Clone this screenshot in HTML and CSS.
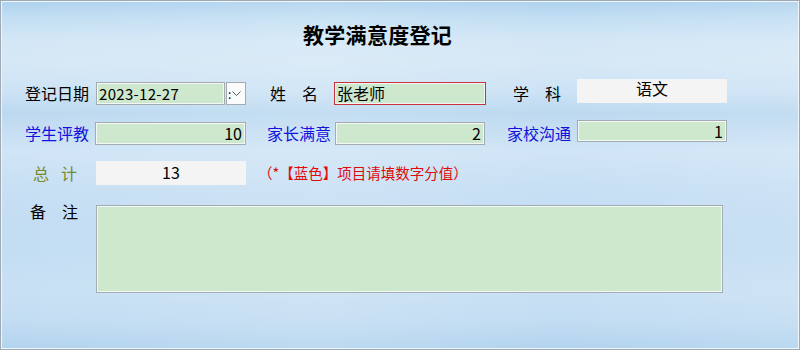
FILE: index.html
```html
<!DOCTYPE html>
<html lang="zh-CN">
<head>
<meta charset="utf-8">
<title>教学满意度登记</title>
<link rel="stylesheet" href="styles.css">
</head>
<body>
<div class="window">
  <h1 class="title">教学满意度登记</h1>
  <div class="form">
    <span class="lbl r1">登记日期</span>
    <div class="date-wrap r1">
      <span class="field green date-input">2023-12-27</span>
      <span class="drop"><span class="focus">:</span><svg width="9" height="6" viewBox="0 0 9 6"><path d="M0.5 0.5 L4.5 4.5 L8.5 0.5" fill="none" stroke="#555" stroke-width="1"/></svg></span>
    </div>
    <span class="lbl r1 spaced name-lbl">姓名</span>
    <span class="field green r1 name-input">张老师</span>
    <span class="lbl r1 spaced subj-lbl">学科</span>
    <span class="field gray subj-input">语文</span>

    <span class="lbl blue r2">学生评教</span>
    <span class="field green num r2 f-a">10</span>
    <span class="lbl blue r2 pad21">家长满意</span>
    <span class="field green num r2 f-b">2</span>
    <span class="lbl blue r2 pad21">家校沟通</span>
    <span class="field green num f-c">1</span>

    <span class="lbl olive r3 total-lbl">总计</span>
    <span class="field gray r3 total-input">13</span>
    <span class="hint r3">（*【蓝色】项目请填数字分值）</span>

    <span class="lbl spaced r4 memo-lbl">备注</span>
    <span class="field green memo r4"></span>
  </div>
</div>
</body>
</html>
```

FILE: styles.css
```css
html, body {
  margin: 0;
  padding: 0;
}
body {
  width: 800px;
  height: 350px;
  font-family: "Noto Sans CJK SC", "Liberation Sans", sans-serif;
  font-size: 16px;
  color: #000;
}
.window {
  box-sizing: border-box;
  width: 800px;
  height: 350px;
  border: 1px solid #9ea9b3;
  box-shadow: inset 0 0 0 1px #eef5fb;
  padding: 18px 0 0 24px;
  background:
    linear-gradient(90deg, rgba(255,255,255,0) 0%, rgba(255,255,255,0.12) 40%, rgba(255,255,255,0) 70%, rgba(255,255,255,0.1) 100%),
    linear-gradient(180deg,
      #aed2ee 0px, #c3dff3 18px, #d4e7f6 40px, #d6e8f6 62px,
      #cde3f5 90px, #bcd9f0 112px, #c6def3 130px, #d0e5f6 150px,
      #c8e0f4 185px, #c4ddf3 215px, #c3ddf3 250px, #c9e1f4 290px,
      #c2dcf2 320px, #b2d4ef 348px);
}
.title {
  margin: 0;
  padding-left: 278px;
  height: 30px;
  line-height: 30px;
  font-size: 21px;
  font-weight: 700;
  letter-spacing: 0.3px;
}
.form {
  margin-top: 30px;
  display: grid;
  grid-template-columns: 71px 150px 88px 152px 91px 150px;
  grid-template-rows: 26px 26px 26px 88px;
  row-gap: 14px;
}
.lbl {
  white-space: nowrap;
  line-height: 22px;
}
.r1, .r2, .r3 { align-self: end; }
.r1.lbl, .r2.lbl, .r3.lbl { margin-bottom: 1px; }
.r4 { align-self: start; }
.blue { color: #1212dc; }
.olive { color: #768a2c; }
.spaced { letter-spacing: 16px; }
.name-lbl { padding-left: 24px; }
.subj-lbl { padding-left: 27px; }
.pad21 { padding-left: 21px; }
.total-lbl { padding-left: 8px; letter-spacing: 12px; }
.memo-lbl { padding-left: 5px; margin-top: 1px; }

.field {
  box-sizing: border-box;
  display: block;
  white-space: nowrap;
  padding: 0 3px;
}
.green {
  background: #cde8cd;
  border: 1px solid #a3abb3;
  box-shadow: inset 0 0 0 1px #f4f8f4;
}
.gray {
  background: #f4f4f4;
  text-align: center;
}
.num {
  text-align: right;
  line-height: 21px;
}
.date-wrap {
  display: flex;
  gap: 1px;
  height: 23px;
  width: 150px;
}
.date-input {
  width: 129px;
  height: 23px;
  line-height: 21px;
  font-size: 15px;
  padding-left: 2px;
  letter-spacing: 0.3px;
}
.drop {
  box-sizing: border-box;
  width: 20px;
  height: 23px;
  background: #fbfbfb;
  border: 1px solid #a3abb3;
  display: flex;
  align-items: center;
  gap: 1px;
  padding-left: 1px;
}
.focus {
  font-size: 12px;
  line-height: 12px;
  color: #000;
}
.name-input {
  height: 23px;
  line-height: 21px;
  border-color: #c8323c;
  box-shadow: inset 0 0 0 1px #f4f4f4;
  padding-left: 2px;
}
.subj-input {
  align-self: start;
  height: 24px;
  line-height: 19px;
}
.f-a {
  height: 23px;
  margin-left: -1px;
}
.f-b {
  height: 23px;
  margin: 0 1px;
}
.f-c {
  align-self: start;
  height: 22px;
  margin-top: 1px;
  line-height: 20px;
}
.total-input {
  height: 24px;
  line-height: 22px;
}
.hint {
  grid-column: 3 / 7;
  padding-left: 12px;
  color: #e00a0a;
  font-size: 14.5px;
  line-height: 22px;
  margin-bottom: 1px;
  white-space: nowrap;
}
.memo {
  grid-column: 2 / 7;
  height: 88px;
  margin-top: 6px;
  margin-right: 4px;
}
```
